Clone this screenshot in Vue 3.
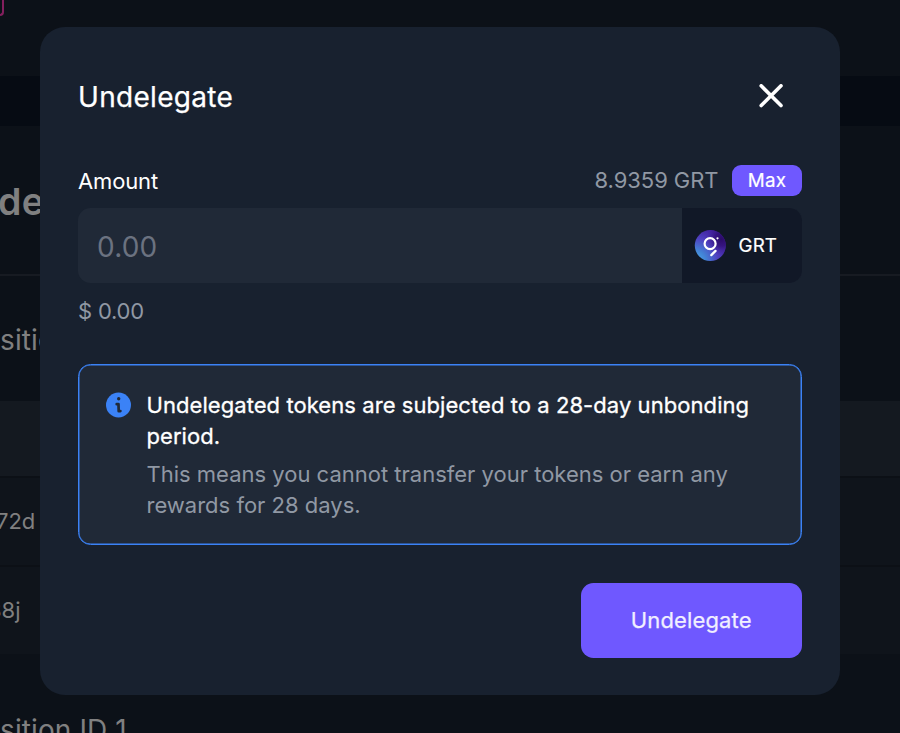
<script setup>
import { ref } from 'vue'

const amount = ref('')
</script>

<template>
  <div class="screen">
    <div class="page">
      <div class="topbar"><span class="tag"></span></div>
      <div class="band"></div>
      <div class="hero"><span class="hero-text">de</span></div>
      <div class="section"><span class="section-text">sition</span></div>
      <div class="table-head"></div>
      <div class="row"><span class="row-text first">72d</span></div>
      <div class="row"><span class="row-text second">88j</span></div>
      <div class="section last"><span class="section-text">sition ID 1</span></div>
    </div>

    <div class="modal" role="dialog">
      <header class="modal-head">
        <h2 class="title">Undelegate</h2>
        <button class="close" type="button">
          <svg width="24" height="24" viewBox="0 0 24 24" fill="none" stroke="#fff" stroke-width="3.6" stroke-linecap="round">
            <path d="M2.2 1.8 22 21.6M22 1.8 2.2 21.6" />
          </svg>
        </button>
      </header>

      <div class="amount-head">
        <label class="label">Amount</label>
        <span class="balance">8.9359 GRT</span>
        <button class="max" type="button">Max</button>
      </div>

      <div class="field">
        <input v-model="amount" class="input" placeholder="0.00" />
        <div class="token">
          <svg class="logo" width="32" height="32" viewBox="0 0 32 32" fill="none">
            <defs>
              <radialGradient id="base" cx="0" cy="1" r="1.25">
                <stop offset="0" stop-color="#4caeed" />
                <stop offset=".28" stop-color="#4383d6" />
                <stop offset=".6" stop-color="#5040c0" />
                <stop offset="1" stop-color="#3b1790" />
              </radialGradient>
              <radialGradient id="shade" cx=".86" cy=".3" r=".55">
                <stop offset="0" stop-color="#2b0b68" />
                <stop offset=".4" stop-color="#320f78" stop-opacity=".8" />
                <stop offset="1" stop-color="#4c2bb0" stop-opacity="0" />
              </radialGradient>
            </defs>
            <circle cx="16.3" cy="15.6" r="15.5" fill="url(#base)" />
            <circle cx="16.3" cy="15.6" r="15.5" fill="url(#shade)" />
            <circle cx="16.1" cy="13.7" r="5.5" stroke="#fff" stroke-width="2.2" />
            <circle cx="23.5" cy="8.3" r="1.1" fill="#fff" />
            <path d="m17.3 25.1 4.2-4.2" stroke="#fff" stroke-width="2.3" stroke-linecap="round" />
          </svg>
          <span class="symbol">GRT</span>
        </div>
      </div>
      <div class="fiat">$ 0.00</div>

      <div class="notice">
        <svg class="info" width="26" height="26" viewBox="0 0 26 26">
          <circle cx="12.5" cy="13" r="12.5" fill="#3b82f6" />
          <circle cx="12.7" cy="6.8" r="1.7" fill="#202937" />
          <path d="M10.7 12.2h1.8l.2 6.9h1.7" fill="none" stroke="#202937" stroke-width="2.7" stroke-linecap="round" stroke-linejoin="round" />
        </svg>
        <div class="notice-body">
          <p class="strong">Undelegated tokens are subjected to a 28-day unbonding period.</p>
          <p class="muted">This means you cannot transfer your tokens or earn any rewards for 28 days.</p>
        </div>
      </div>

      <button class="submit" type="button">Undelegate</button>
    </div>
  </div>
</template>

<style>
body {
  background: #0c1118;
  overflow: hidden;
}
</style>

<style scoped>
* {
  box-sizing: border-box;
}
.screen {
  position: relative;
  width: 900px;
  height: 733px;
  overflow: hidden;
  font-family: Inter, "Liberation Sans", sans-serif;
}
button {
  font-family: inherit;
  border: 0;
  padding: 0;
}
.page {
  height: 733px;
  display: flex;
  flex-direction: column;
  color: #808080;
  white-space: nowrap;
}
.topbar {
  height: 76px;
  flex: none;
}
.tag {
  display: block;
  width: 4px;
  height: 16px;
  border: solid #831f5d;
  border-width: 0 2px 2px 0;
  border-radius: 0 0 5px 0;
}
.band {
  height: 50px;
  flex: none;
  background: #060b13;
}
.hero {
  height: 150px;
  flex: none;
  padding-top: 53px;
  border-bottom: 2px solid #171b22;
}
.hero-text {
  display: block;
  margin-left: -2px;
  font-size: 37.5px;
  line-height: 46px;
  font-weight: 600;
  letter-spacing: 0.3px;
}
.section {
  height: 125px;
  flex: none;
  padding-top: 46px;
}
.section-text {
  display: block;
  font-size: 28px;
  line-height: 36px;
  letter-spacing: 0.1px;
}
.section.last {
  height: 78px;
  padding-top: 58px;
}
.table-head {
  height: 75px;
  flex: none;
  background: #141920;
}
.row {
  height: 89px;
  flex: none;
  display: flex;
  align-items: center;
  padding-bottom: 2px;
  background: #0f141b;
  border-top: 2px solid #0c1016;
}
.row-text {
  font-size: 22px;
}
.first {
  margin-left: -4px;
}
.second {
  margin-left: -12px;
}
.modal {
  position: absolute;
  left: 40px;
  top: 27px;
  width: 800px;
  height: 668px;
  padding: 48px 38px 37px;
  border-radius: 25px;
  background: #18212f;
  color: #fff;
  display: flex;
  flex-direction: column;
}
.modal-head {
  height: 44px;
  display: flex;
  align-items: center;
  justify-content: space-between;
  padding-right: 19px;
}
.title {
  margin: 0;
  font-size: 28px;
  line-height: 44px;
  font-weight: 400;
  letter-spacing: 0.3px;
  -webkit-text-stroke: 0.25px #fff;
}
.close {
  display: flex;
  margin-top: -2px;
  background: none;
}
.amount-head {
  height: 31px;
  margin-top: 46px;
  display: flex;
  align-items: center;
}
.label {
  flex: 1;
  font-size: 22px;
  letter-spacing: -0.15px;
}
.balance {
  margin: 0 13.5px 1px 0;
  font-size: 22px;
  letter-spacing: -0.05px;
  color: #9098a4;
}
.max {
  width: 70px;
  height: 31px;
  border-radius: 9px;
  background: #6f58ff;
  color: #fff;
  font-size: 18.75px;
  letter-spacing: 0.2px;
  -webkit-text-stroke: 0.2px #fff;
}
.field {
  height: 75px;
  margin-top: 12px;
  display: flex;
  border-radius: 12.5px;
  overflow: hidden;
  background: #202937;
}
.input {
  flex: 1;
  min-width: 0;
  padding: 2px 19px 0;
  border: 0;
  outline: 0;
  background: none;
  color: #fff;
  font-family: inherit;
  font-size: 28px;
  letter-spacing: 0.2px;
}
.input::placeholder {
  color: #6b7280;
  opacity: 1;
}
.token {
  width: 120px;
  padding-left: 12px;
  display: flex;
  align-items: center;
  gap: 12.5px;
  background: #111827;
}
.symbol {
  font-size: 18.75px;
  letter-spacing: 0.15px;
  -webkit-text-stroke: 0.2px #fff;
}
.fiat {
  margin-top: 12px;
  font-size: 22px;
  line-height: 32px;
  letter-spacing: -0.2px;
  color: #9098a4;
}
.notice {
  height: 181px;
  margin-top: 37px;
  padding: 25px 27px;
  display: flex;
  gap: 15px;
  border: 1.6px solid #3b82f6;
  box-shadow: inset 0 0 0 0.5px #3b82f6;
  border-radius: 12.5px;
  background: #202937;
}
.info {
  flex: none;
  margin-top: 2px;
}
.notice-body {
  margin-left: -0.5px;
  font-size: 22px;
  line-height: 31.25px;
}
.notice-body p {
  margin: 0;
}
.strong {
  letter-spacing: 0.065px;
  -webkit-text-stroke: 0.3px #fff;
}
.notice-body .muted {
  margin-top: 6px;
  color: #9098a4;
}
.submit {
  align-self: flex-end;
  width: 221.5px;
  height: 75px;
  margin-top: 38px;
  padding-bottom: 1px;
  border-radius: 12.5px;
  background: #6f58ff;
  color: #f1efff;
  font-size: 22px;
  letter-spacing: 0.15px;
  -webkit-text-stroke: 0.25px #f1efff;
}
</style>
